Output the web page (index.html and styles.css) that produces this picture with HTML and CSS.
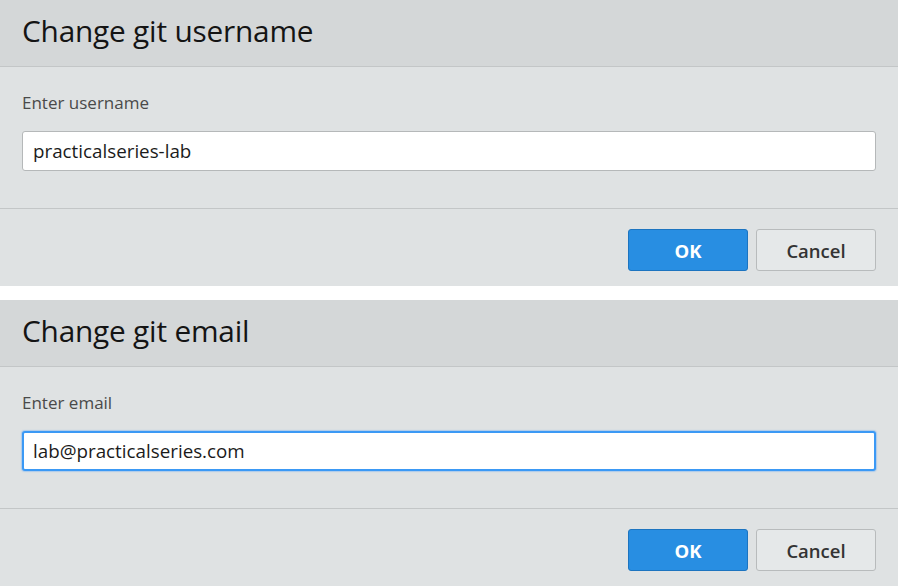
FILE: index.html
```html
<!DOCTYPE html>
<html>
<head>
<meta charset="utf-8">
<link rel="stylesheet" href="styles.css">
</head>
<body>
<div class="stack">
  <section class="dialog">
    <header class="dlg-head"><h1 class="dlg-title">Change git username</h1></header>
    <div class="dlg-body">
      <label class="dlg-label">Enter username</label>
      <div class="field">practicalseries-lab</div>
    </div>
    <footer class="dlg-foot">
      <button class="btn btn-ok">OK</button>
      <button class="btn btn-cancel">Cancel</button>
    </footer>
  </section>
  <section class="dialog">
    <header class="dlg-head"><h1 class="dlg-title">Change git email</h1></header>
    <div class="dlg-body">
      <label class="dlg-label">Enter email</label>
      <div class="field focused">lab@practicalseries.com</div>
    </div>
    <footer class="dlg-foot">
      <button class="btn btn-ok">OK</button>
      <button class="btn btn-cancel">Cancel</button>
    </footer>
  </section>
</div>
</body>
</html>
```

FILE: styles.css
```css
* { box-sizing: border-box; }
html, body { margin: 0; padding: 0; background: #ffffff; }
body { font-family: "Open Sans", "Noto Sans", sans-serif; width: 898px; height: 586px; overflow: hidden; }
.stack { display: flex; flex-direction: column; gap: 14px; }
.dialog { display: flex; flex-direction: column; height: 286px; background: #dfe2e3; }
.dlg-head {
  height: 67px;
  background: #d4d7d8;
  border-bottom: 1px solid #c3c6c7;
  padding: 0 22px 4px;
  display: flex;
  align-items: center;
}
.dlg-title { margin: 0; font-weight: 400; font-size: 29.8px; line-height: 36px; color: #141414; letter-spacing: -0.2px; }
.dlg-body {
  height: 142px;
  padding: 24px 22px 0;
  border-bottom: 1px solid #c3c6c7;
  display: flex;
  flex-direction: column;
}
.dlg-label { font-size: 17px; line-height: 24px; color: #4a4a4a; margin-bottom: 16px; }
.field {
  height: 40px;
  background: #ffffff;
  border: 1px solid #b5b8b9;
  border-radius: 3px;
  padding: 0 10px;
  display: flex;
  align-items: center;
  font-size: 18.8px;
  color: #1b1b1b;
}
.field.focused { border: 2px solid #3b99f5; box-shadow: 0 0 1px 1px rgba(80,160,250,0.35); padding: 0 9px; }
.dlg-foot {
  flex: 1;
  display: flex;
  justify-content: flex-end;
  align-items: flex-start;
  gap: 8px;
  padding: 20px 22px 0;
}
.btn {
  width: 120px;
  height: 42px;
  border-radius: 3px;
  font-family: "Open Sans", "Noto Sans", sans-serif;
  font-size: 18.5px;
  font-weight: 600;
  cursor: pointer;
}
.btn-ok { background: #288ee2; border: 1px solid #1c74c0; color: #ffffff; font-weight: 700; }
.btn-cancel { background: #e5e8e9; border: 1px solid #b8bbbc; color: #333333; }
```
